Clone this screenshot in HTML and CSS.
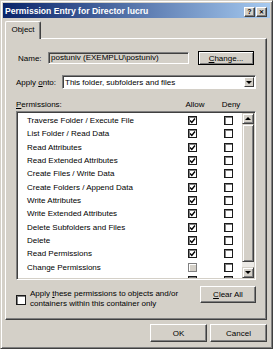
FILE: index.html
```html
<!DOCTYPE html>
<html>
	<head>
		<meta charset="utf-8" />
		<title>Permission Entry for Director lucru</title>
		<link rel="stylesheet" href="styles.css">
	</head>
	<body>
		<div class="window">
			<div class="titlebar">
				<span class="title">Permission Entry for Director lucru</span>
				<div class="tb_buttons">
					<span class="tb_btn">?</span>
					<span class="tb_btn tb_close">&#x2715;</span>
				</div>
			</div>
			<div class="content">
				<div class="tabs">
					<div class="tab">Object</div>
				</div>
				<div class="panel">
					<div class="name_row">
						<span class="lbl_name">Name:</span>
						<div class="textbox">postuniv (EXEMPLU\postuniv)</div>
						<div class="btn btn_default"><u>C</u>hange...</div>
					</div>
					<div class="apply_row">
						<span class="lbl_apply">Apply <u>o</u>nto:</span>
						<div class="select">
							<span class="select_text">This folder, subfolders and files</span>
							<span class="drop_btn"><span class="arrow_down"></span></span>
						</div>
					</div>
					<div class="perm_head">
						<span><u>P</u>ermissions:</span>
						<span class="col_head">Allow</span>
						<span class="col_head">Deny</span>
					</div>
					<div class="list">
						<div class="rows">
							<div class="perm"><span>Traverse Folder / Execute File</span><span class="cell"><span class="chk on"></span></span><span class="cell"><span class="chk"></span></span></div>
							<div class="perm"><span>List Folder / Read Data</span><span class="cell"><span class="chk on"></span></span><span class="cell"><span class="chk"></span></span></div>
							<div class="perm"><span>Read Attributes</span><span class="cell"><span class="chk on"></span></span><span class="cell"><span class="chk"></span></span></div>
							<div class="perm"><span>Read Extended Attributes</span><span class="cell"><span class="chk on"></span></span><span class="cell"><span class="chk"></span></span></div>
							<div class="perm"><span>Create Files / Write Data</span><span class="cell"><span class="chk on"></span></span><span class="cell"><span class="chk"></span></span></div>
							<div class="perm"><span>Create Folders / Append Data</span><span class="cell"><span class="chk on"></span></span><span class="cell"><span class="chk"></span></span></div>
							<div class="perm"><span>Write Attributes</span><span class="cell"><span class="chk on"></span></span><span class="cell"><span class="chk"></span></span></div>
							<div class="perm"><span>Write Extended Attributes</span><span class="cell"><span class="chk on"></span></span><span class="cell"><span class="chk"></span></span></div>
							<div class="perm"><span>Delete Subfolders and Files</span><span class="cell"><span class="chk on"></span></span><span class="cell"><span class="chk"></span></span></div>
							<div class="perm"><span>Delete</span><span class="cell"><span class="chk on"></span></span><span class="cell"><span class="chk"></span></span></div>
							<div class="perm"><span>Read Permissions</span><span class="cell"><span class="chk on"></span></span><span class="cell"><span class="chk"></span></span></div>
							<div class="perm"><span>Change Permissions</span><span class="cell"><span class="chk grey"></span></span><span class="cell"><span class="chk"></span></span></div>
							<div class="perm"><span>Take Ownership</span><span class="cell"><span class="chk"></span></span><span class="cell"><span class="chk"></span></span></div>
						</div>
						<div class="scrollbar">
							<span class="sb_btn"><span class="arrow_up"></span></span>
							<div class="sb_track"><div class="sb_thumb"></div></div>
							<span class="sb_btn"><span class="arrow_down"></span></span>
						</div>
					</div>
					<div class="bottom_row">
						<div class="inherit">
							<span class="chk"></span>
							<span class="inherit_text">Apply <u>t</u>hese permissions to objects and/or<br>containers within this container only</span>
						</div>
						<div class="btn btn_clear"><u>C</u>lear All</div>
					</div>
				</div>
				<div class="footer">
					<div class="btn btn_foot">OK</div>
					<div class="btn btn_foot">Cancel</div>
				</div>
			</div>
		</div>
	</body>
</html>
```

FILE: styles.css
```css
*{box-sizing:border-box}
html,body{margin:0;padding:0;background:#D4D0C8}
body{font:8px "Liberation Sans",Arial,sans-serif;color:#000}
u{text-decoration:underline;text-underline-offset:1px}

.window{
	width:273px;
	height:349px;
	padding:1px;
	background:#D4D0C8;
	border:1px solid;
	border-color:#D4D0C8 #404040 #404040 #D4D0C8;
	box-shadow:inset 1px 1px 0 #fff,inset -1px -1px 0 #808080;
	display:flex;
	flex-direction:column;
}

/* title bar */
.titlebar{
	height:15px;
	margin:1px 1px 0 1px;
	background:linear-gradient(to right,#0A246A,#A6CAF0);
	display:flex;
	align-items:center;
	justify-content:space-between;
	padding:0 3px 0 2px;
}
.title{color:#fff;font-weight:bold;font-size:8.6px;white-space:nowrap}
.tb_buttons{display:flex;gap:1px;margin-top:3px}
.tb_btn{
	width:11px;
	height:10px;
	background:#D4D0C8;
	border:1px solid;
	border-color:#fff #404040 #404040 #fff;
	box-shadow:inset -1px -1px 0 #808080;
	font-size:7px;
	font-weight:bold;
	line-height:8px;
	text-align:center;
}
.tb_close{font-size:6px}

.content{
	flex:1;
	display:flex;
	flex-direction:column;
	padding:3px 4px 0 3px;
}

/* tabs */
.tabs{display:flex;height:17px;position:relative;z-index:1}
.tab{
	width:36px;
	height:18px;
	background:#D4D0C8;
	border:1px solid;
	border-bottom:0;
	border-color:#fff #404040 #404040 #fff;
	border-radius:2px 2px 0 0;
	box-shadow:inset -1px 0 0 #808080;
	text-align:center;
	line-height:15px;
}

.panel{
	height:282px;
	border:1px solid;
	border-color:#fff #404040 #404040 #fff;
	box-shadow:inset -1px -1px 0 #808080;
	padding:12px 10px 0 10px;
	display:flex;
	flex-direction:column;
}

/* name and apply rows */
.name_row{display:flex;align-items:center;height:14px}
.lbl_name{width:32px;padding-left:2px}
.textbox{
	width:141px;
	height:12px;
	margin-right:9px;
	border:1px solid;
	border-color:#808080 #fff #fff #808080;
	box-shadow:inset 1px 1px 0 #404040;
	padding:0 2px;
	line-height:10px;
	white-space:nowrap;
	overflow:hidden;
}
.btn{
	background:#D4D0C8;
	border:1px solid;
	border-color:#fff #404040 #404040 #fff;
	box-shadow:inset -1px -1px 0 #808080;
	display:flex;
	align-items:center;
	justify-content:center;
}
.btn_default{
	width:56px;
	height:14px;
	border-color:#000;
	box-shadow:inset 1px 1px 0 #fff,inset -1px -1px 0 #808080;
}

.apply_row{display:flex;align-items:center;height:14px;margin-top:10px}
.lbl_apply{width:46px}
.select{
	flex:1;
	height:14px;
	background:#fff;
	border:1px solid;
	border-color:#808080 #fff #fff #808080;
	box-shadow:inset 1px 1px 0 #404040;
	display:flex;
	align-items:center;
	padding:1px 1px 1px 2px;
}
.select_text{flex:1;white-space:nowrap}
.drop_btn{
	width:10px;
	height:10px;
	background:#D4D0C8;
	border:1px solid;
	border-color:#fff #404040 #404040 #fff;
	display:flex;
	align-items:center;
	justify-content:center;
}
.arrow_down{width:0;height:0;border-left:3px solid transparent;border-right:3px solid transparent;border-top:3px solid #000}
.arrow_up{width:0;height:0;border-left:3px solid transparent;border-right:3px solid transparent;border-bottom:3px solid #000}

/* permissions list */
.perm_head{
	display:grid;
	grid-template-columns:1fr 36px 28px;
	column-gap:4px;
	height:13px;
	margin-top:9px;
	padding-right:11px;
	align-items:center;
}
.col_head{text-align:center}

.list{
	height:169px;
	background:#fff;
	border:1px solid;
	border-color:#808080 #fff #fff #808080;
	box-shadow:inset 1px 1px 0 #404040,inset -1px -1px 0 #D4D0C8;
	padding:1px;
	display:flex;
	overflow:hidden;
}
.rows{flex:1;padding-top:1px;overflow:hidden}
.perm{
	display:grid;
	grid-template-columns:1fr 36px 28px;
	column-gap:4px;
	height:13.33px;
	align-items:center;
	padding-left:9px;
	white-space:nowrap;
}
.cell{display:flex;justify-content:center}
.chk{
	width:9px;
	height:9px;
	background:#fff;
	border:1px solid #1a1a1a;
	box-shadow:inset 1px 1px 0 #808080;
	display:inline-block;
}
.chk.on{
	background:#fff url("data:image/svg+xml,%3Csvg xmlns='http://www.w3.org/2000/svg' width='7' height='7'%3E%3Cpolyline points='1,3.5 2.8,5.4 6,1.5' fill='none' stroke='%23000' stroke-width='1.4'/%3E%3C/svg%3E") center/7px 7px no-repeat;
}
.chk.grey{background:#D4D0C8;border-color:#808080;box-shadow:inset 1px 1px 0 #fff}

.scrollbar{width:12px;display:flex;flex-direction:column}
.sb_btn,.sb_thumb{
	background:#D4D0C8;
	border:1px solid;
	border-color:#D4D0C8 #404040 #404040 #D4D0C8;
	box-shadow:inset 1px 1px 0 #fff,inset -1px -1px 0 #808080;
}
.sb_btn{height:11px;display:flex;align-items:center;justify-content:center}
.sb_track{flex:1;background:#ECEAE6;display:flex;flex-direction:column}
.sb_thumb{height:138px}

/* bottom */
.bottom_row{display:flex;justify-content:space-between;margin-top:6px}
.inherit{display:flex;align-items:flex-start;margin-top:3px}
.inherit .chk{width:10px;height:10px;margin-top:6px;margin-right:4px}
.inherit_text{line-height:10px;white-space:nowrap}
.btn_clear{width:56px;height:17px}

.footer{display:flex;justify-content:flex-end;gap:3px;margin-top:4px}
.btn_foot{width:57px;height:18px}
```
